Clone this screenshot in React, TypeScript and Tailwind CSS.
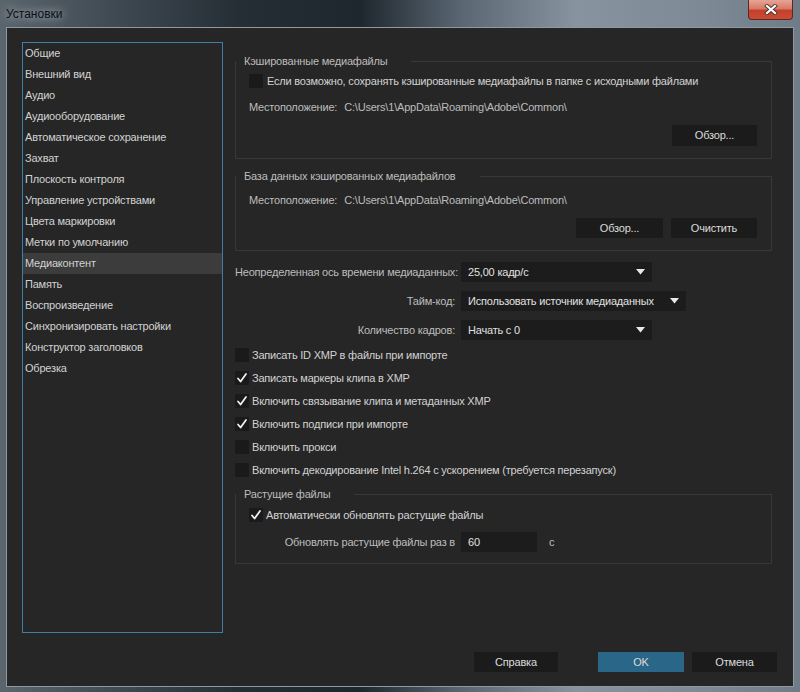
import React from "react";

const items = [
  "Общие",
  "Внешний вид",
  "Аудио",
  "Аудиооборудование",
  "Автоматическое сохранение",
  "Захват",
  "Плоскость контроля",
  "Управление устройствами",
  "Цвета маркировки",
  "Метки по умолчанию",
  "Медиаконтент",
  "Память",
  "Воспроизведение",
  "Синхронизировать настройки",
  "Конструктор заголовков",
  "Обрезка",
];

function Check({ checked }: { checked?: boolean }) {
  return (
    <div className="w-[14px] h-[14px] bg-[#1a1a1a] flex items-center justify-center shrink-0">
      {checked && (
        <svg width="12" height="12" viewBox="0 0 12 12">
          <path d="M2 6.5 L4.6 9.5 L10 2" fill="none" stroke="#f0f0f0" strokeWidth="1.8" strokeLinecap="round" strokeLinejoin="round" />
        </svg>
      )}
    </div>
  );
}

function Arrow() {
  return (
    <svg width="9" height="6" viewBox="0 0 9 6">
      <path d="M0 0 H9 L4.5 5.5 Z" fill="#e8e8e8" />
    </svg>
  );
}

function Btn({ label, w, blue }: { label: string; w: string; blue?: boolean }) {
  return (
    <div
      className={`${w} h-[20px] flex items-center justify-center text-[#dcdcdc] ${
        blue ? "bg-[#2a6688]" : "bg-[#1b1b1b]"
      }`}
    >
      {label}
    </div>
  );
}

function CheckRow({ checked, label }: { checked?: boolean; label: string }) {
  return (
    <div className="h-[14px] flex items-center gap-[3px]">
      <Check checked={checked} />
      <span className="whitespace-nowrap">{label}</span>
    </div>
  );
}

function DropRow({ label, value, w }: { label: string; value: string; w: string }) {
  return (
    <div className="h-[20px] flex items-center">
      <div className="w-[220px] text-right whitespace-nowrap text-[#bdbdbd]">{label}</div>
      <div className={`ml-[6px] ${w} h-[20px] bg-[#1c1c1c] flex items-center justify-between pl-[7px] pr-[7px]`}>
        <span className="text-[#e0e0e0] whitespace-nowrap">{value}</span>
        <Arrow />
      </div>
    </div>
  );
}

function Legend({ children }: { children: React.ReactNode }) {
  return (
    <legend className="ml-0 pl-[8px] pr-[24px] h-[14px] leading-[14px] text-[#bdbdbd]">{children}</legend>
  );
}

export default function App() {
  return (
    <div className="w-[800px] h-[692px] flex flex-col overflow-hidden font-['Liberation_Sans',Arial,sans-serif] text-[11px] tracking-[-0.2px] bg-[linear-gradient(90deg,#5b656e_0%,#444e57_12%,#252e35_30%,#1f272e_45%,#5b6874_58%,#8794a0_72%,#7d8a96_88%,#6f7c88_100%)]">
      <div className="h-[27px] relative flex items-center pl-[6px] shrink-0">
        <span className="text-[12px] tracking-normal text-[#0c1014] [text-shadow:0_0_8px_rgba(230,235,240,0.85)]">
          Установки
        </span>
        <div className="absolute right-[7px] top-0 w-[45px] h-[20px] rounded-b-[4px] border border-[#5a2a22] border-t-0 bg-[linear-gradient(180deg,#e6a596_0%,#d77a66_45%,#c4402a_55%,#cc4a33_100%)] flex items-center justify-center">
          <svg width="14" height="11" viewBox="0 0 14 11">
            <path d="M3 2 L11 9 M11 2 L3 9" stroke="#4a3430" strokeWidth="4" strokeLinecap="square" />
            <path d="M3 2 L11 9 M11 2 L3 9" stroke="#ffffff" strokeWidth="2.2" strokeLinecap="square" />
          </svg>
        </div>
      </div>
      <div className="mx-[6px] mb-[5px] flex-1 border border-[#8e99a2] bg-[#262626] flex flex-col pt-[14px] pl-[15px] text-[#d2d2d2]">
        <div className="flex h-[591px]">
          <div className="w-[201px] h-[591px] border border-[#3f7fa6] flex flex-col">
            {items.map((it) => (
              <div
                key={it}
                className={`h-[21px] flex items-center pl-[2px] whitespace-nowrap ${
                  it === "Медиаконтент" ? "bg-[#3c3c3c]" : ""
                }`}
              >
                {it}
              </div>
            ))}
          </div>
          <div className="ml-[12px] w-[537px] flex flex-col pt-[12px]">
            <fieldset className="border border-[#383838] p-0 m-0">
              <Legend>Кэшированные медиафайлы</Legend>
              <div className="px-[13px] pb-[12px]">
                <div className="mt-[6px] h-[14px] flex items-center gap-[4px]">
                  <Check />
                  <span className="whitespace-nowrap">
                    Если возможно, сохранять кэшированные медиафайлы в папке с исходными файлами
                  </span>
                </div>
                <div className="mt-[12px] h-[14px] flex items-center whitespace-nowrap text-[#bdbdbd]">
                  Местоположение:<span className="ml-[7px]">C:\Users\1\AppData\Roaming\Adobe\Common\</span>
                </div>
                <div className="mt-[11px] flex justify-end pr-[1px]">
                  <div className="w-[85px] h-[21px] bg-[#1b1b1b] flex items-center justify-center text-[#dcdcdc]">
                    Обзор...
                  </div>
                </div>
              </div>
            </fieldset>

            <fieldset className="mt-[10px] border border-[#383838] p-0 m-0">
              <Legend>База данных кэшированных медиафайлов</Legend>
              <div className="px-[13px] pb-[12px]">
                <div className="mt-[10px] h-[14px] flex items-center whitespace-nowrap text-[#bdbdbd]">
                  Местоположение:<span className="ml-[7px]">C:\Users\1\AppData\Roaming\Adobe\Common\</span>
                </div>
                <div className="mt-[11px] flex justify-end gap-[8px] pr-[1px]">
                  <Btn label="Обзор..." w="w-[87px]" />
                  <Btn label="Очистить" w="w-[86px]" />
                </div>
              </div>
            </fieldset>

            <div className="mt-[11px] flex flex-col gap-[9px]">
              <DropRow label="Неопределенная ось времени медиаданных:" value="25,00 кадр/с" w="w-[191px]" />
              <DropRow label="Тайм-код:" value="Использовать источник медиаданных" w="w-[225px]" />
              <DropRow label="Количество кадров:" value="Начать с 0" w="w-[191px]" />
            </div>

            <div className="mt-[8px] flex flex-col gap-[9px]">
              <CheckRow label="Записать ID XMP в файлы при импорте" />
              <CheckRow checked label="Записать маркеры клипа в XMP" />
              <CheckRow checked label="Включить связывание клипа и метаданных XMP" />
              <CheckRow checked label="Включить подписи при импорте" />
              <CheckRow label="Включить прокси" />
              <CheckRow label="Включить декодирование Intel h.264 с ускорением (требуется перезапуск)" />
            </div>

            <fieldset className="mt-[10px] border border-[#383838] p-0 m-0">
              <Legend>Растущие файлы</Legend>
              <div className="px-[13px] pb-[11px]">
                <div className="mt-[7px] h-[14px] flex items-center gap-[3px]">
                  <Check checked />
                  <span className="whitespace-nowrap">Автоматически обновлять растущие файлы</span>
                </div>
                <div className="mt-[10px] h-[20px] flex items-center -ml-[14px]">
                  <div className="w-[220px] text-right whitespace-nowrap text-[#bdbdbd]">
                    Обновлять растущие файлы раз в
                  </div>
                  <div className="ml-[6px] w-[76px] h-[20px] bg-[#1c1c1c] flex items-center pl-[7px] text-[#e0e0e0]">
                    60
                  </div>
                  <span className="ml-[12px] text-[#bdbdbd]">с</span>
                </div>
              </div>
            </fieldset>
          </div>
        </div>
        <div className="mt-[19px] flex justify-end pr-[16px]">
          <Btn label="Справка" w="w-[84px]" />
          <div className="w-[40px]" />
          <Btn label="OK" w="w-[86px]" blue />
          <div className="w-[8px]" />
          <Btn label="Отмена" w="w-[85px]" />
        </div>
      </div>
    </div>
  );
}
